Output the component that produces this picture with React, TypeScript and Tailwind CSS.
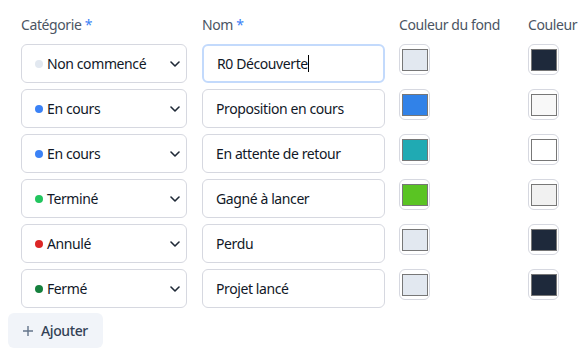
import React from "react";

type Row = { cat: string; dot: string; name: string; bg: string; fg: string; focus?: boolean };

const rows: Row[] = [
  { cat: "Non commencé", dot: "bg-[#e2e8f0]", name: "R0 Découverte", bg: "#e2e8f0", fg: "#1e293b", focus: true },
  { cat: "En cours", dot: "bg-[#3b82f6]", name: "Proposition en cours", bg: "#3182e8", fg: "#f8f8f8" },
  { cat: "En cours", dot: "bg-[#3b82f6]", name: "En attente de retour", bg: "#20aab3", fg: "#ffffff" },
  { cat: "Terminé", dot: "bg-[#22c55e]", name: "Gagné à lancer", bg: "#5ac423", fg: "#f1f1f1" },
  { cat: "Annulé", dot: "bg-[#dc2626]", name: "Perdu", bg: "#e2e8f0", fg: "#1e293b" },
  { cat: "Fermé", dot: "bg-[#15803d]", name: "Projet lancé", bg: "#e2e8f0", fg: "#1e293b" },
];

function Chevron() {
  return (
    <svg width="10" height="6" viewBox="0 0 10 6" fill="none" className="text-[#1f2937] shrink-0">
      <path d="M1 1l4 4 4-4" stroke="currentColor" strokeWidth="1.6" strokeLinecap="round" strokeLinejoin="round" />
    </svg>
  );
}

function Swatch({ color }: { color: string }) {
  return (
    <div className="w-[31px] h-[31px] rounded-md border border-[#d6d8e0] bg-white flex items-center justify-center">
      <div className="w-[26px] h-[22px] border border-[#777777]" style={{ backgroundColor: color }} />
    </div>
  );
}

export default function App() {
  return (
    <div
      className="w-[581px] h-[356px] overflow-hidden bg-white text-[#111827] tracking-[-0.4px]"
      style={{ fontFamily: '"Noto Sans", "Open Sans", sans-serif' }}
    >
      <div className="pl-[21px] pt-[13px]">
        <div className="grid grid-cols-[181px_197px_129px_60px] h-[22px] items-center text-[14px] text-[#4b5563] whitespace-nowrap">
          <div>
            Catégorie <span className="text-[#3b82f6]">*</span>
          </div>
          <div>
            Nom <span className="text-[#3b82f6]">*</span>
          </div>
          <div>Couleur du fond</div>
          <div>Couleur</div>
        </div>
        <div className="mt-[9px] flex flex-col gap-[6px]">
          {rows.map((r, i) => (
            <div key={i} className="grid grid-cols-[181px_197px_129px_60px] h-[39px]">
              <div className="w-[166px] h-[39px] rounded-md border border-[#d6d8e0] bg-white flex items-center pl-[13px] pr-[6px]">
                <span className={`block w-[8px] h-[8px] shrink-0 rounded-full ${r.dot}`} />
                <span className="ml-[4px] text-[14px] flex-1">{r.cat}</span>
                <Chevron />
              </div>
              <div
                className={`w-[183px] h-[39px] rounded-md bg-white flex items-center pl-[13px] text-[14px] ${
                  r.focus ? "border-2 border-[#c3dafc] pl-[12px]" : "border border-[#d6d8e0]"
                }`}
              >
                {r.name}
                {r.focus && <span className="inline-block w-px h-[17px] bg-black" />}
              </div>
              <div>
                <Swatch color={r.bg} />
              </div>
              <div>
                <Swatch color={r.fg} />
              </div>
            </div>
          ))}
        </div>
      </div>
      <button className="ml-[8px] mt-[5px] w-[95px] h-[35px] rounded-md bg-[#f1f4f9] flex items-center pl-[15px] text-[14px] font-medium text-[#334155]">
        <svg width="10" height="10" viewBox="0 0 10 10" className="text-[#64748b] shrink-0">
          <path d="M5 0v10M0 5h10" stroke="currentColor" strokeWidth="1.4" />
        </svg>
        <span className="ml-[8px]">Ajouter</span>
      </button>
    </div>
  );
}
